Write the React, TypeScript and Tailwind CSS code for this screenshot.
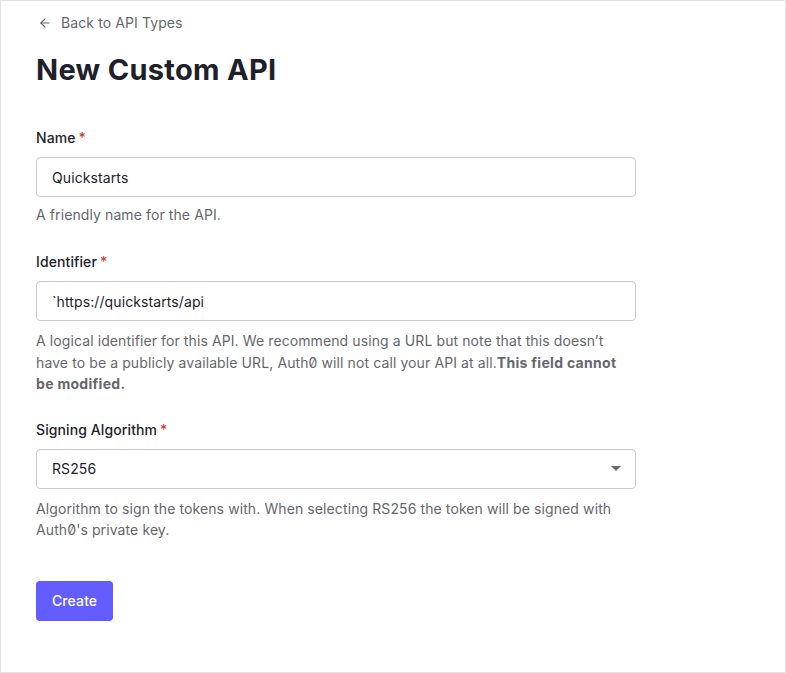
import React from "react";

const Req = () => <span className="text-[#d03c38] ml-[3px]">*</span>;

export default function App() {
  return (
    <div
      className="w-[786px] h-[673px] border border-[#e3e3e3] bg-white text-[#1e212a] overflow-hidden [font-feature-settings:'zero'] tracking-[0.1px]"
      style={{ fontFamily: "Inter, 'Noto Sans', sans-serif" }}
    >
      <div className="pl-[35px] pt-[12px] w-[635px]">
        <a className="flex items-center gap-[9px] text-[14px] leading-[20px] text-[#65676e]">
          <svg width="14" height="14" viewBox="0 0 24 24" fill="none" stroke="currentColor" strokeWidth="2" strokeLinecap="round" strokeLinejoin="round" className="ml-[2px]">
            <path d="M19 12H5" />
            <path d="M12 19l-7-7 7-7" />
          </svg>
          Back to API Types
        </a>
        <h1 className="mt-[19px] text-[29px] leading-[36px] font-bold tracking-[0.3px] text-[#1e212a]">New Custom API</h1>

        <div className="mt-[40px]">
          <label className="block text-[14px] leading-[20px] font-medium">Name<Req /></label>
          <div className="mt-[9px] h-[40px] border border-[#c9cace] rounded-[4px] flex items-center px-[15px] text-[14px]">Quickstarts</div>
          <p className="mt-[8px] text-[14px] leading-[20px] text-[#65676e]">A friendly name for the API.</p>
        </div>

        <div className="mt-[27px]">
          <label className="block text-[14px] leading-[20px] font-medium">Identifier<Req /></label>
          <div className="mt-[9px] h-[40px] border border-[#c9cace] rounded-[4px] flex items-center px-[15px] text-[14px]">`https://quickstarts/api</div>
          <p className="mt-[9px] text-[14px] leading-[21.5px] text-[#65676e]">
            A logical identifier for this API. We recommend using a URL but note that this doesn’t have to be a publicly available URL, Auth0 will not call your API at all.<b className="font-bold tracking-[0.3px]">This field cannot be modified.</b>
          </p>
        </div>

        <div className="mt-[25px]">
          <label className="block text-[14px] leading-[20px] font-medium">Signing Algorithm<Req /></label>
          <div className="mt-[9px] h-[40px] border border-[#c9cace] rounded-[4px] flex items-center justify-between pl-[15px] pr-[14px] text-[14px]">
            <span>RS256</span>
            <svg width="10" height="5" viewBox="0 0 10 5"><path d="M0 0h10L5 5z" fill="#6b6b6b" /></svg>
          </div>
          <p className="mt-[9px] text-[14px] leading-[21.5px] text-[#65676e]">
            Algorithm to sign the tokens with. When selecting RS256 the token will be signed with Auth0's private key.
          </p>
        </div>

        <button className="mt-[40px] h-[40px] px-[16px] rounded-[4px] bg-[#635dff] text-white text-[14px] font-medium">Create</button>
      </div>
    </div>
  );
}
